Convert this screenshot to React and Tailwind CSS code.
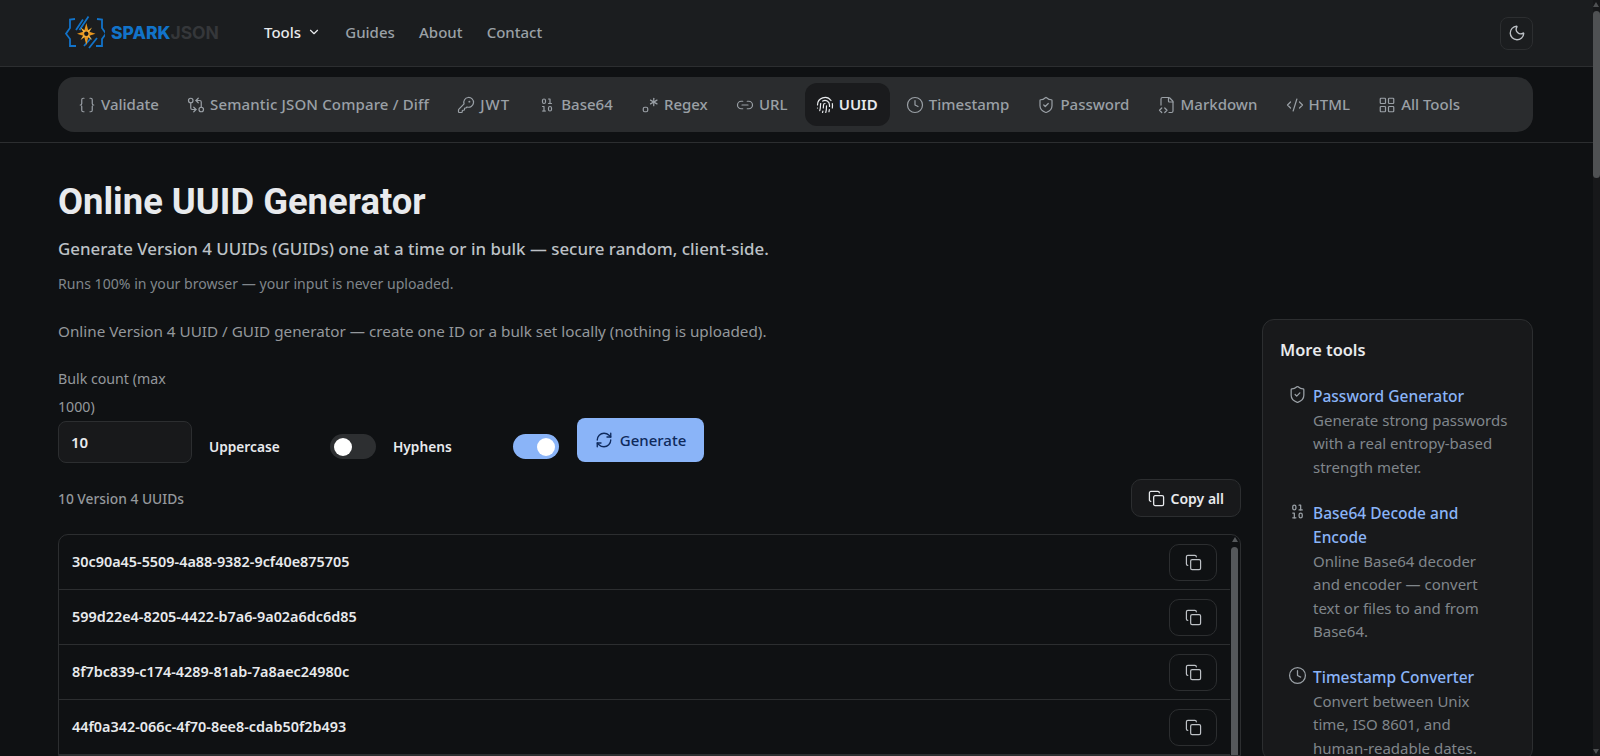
import React from 'react';
import {
  Braces, GitCompareArrows, KeyRound, Binary, Regex, Link2, Fingerprint, Clock, ShieldCheck,
  FileCode2, CodeXml, LayoutGrid, Moon, ChevronDown, RefreshCw, Copy,
} from 'lucide-react';

const toolLinks = [
  { label: 'Validate', icon: Braces },
  { label: 'Semantic JSON Compare / Diff', icon: GitCompareArrows, text: 'tracking-[0.15px]' },
  { label: 'JWT', icon: KeyRound, text: 'tracking-[1px]' },
  { label: 'Base64', icon: Binary },
  { label: 'Regex', icon: Regex },
  { label: 'URL', icon: Link2 },
  { label: 'UUID', icon: Fingerprint, active: true },
  { label: 'Timestamp', icon: Clock },
  { label: 'Password', icon: ShieldCheck },
  { label: 'Markdown', icon: FileCode2 },
  { label: 'HTML', icon: CodeXml },
  { label: 'All Tools', icon: LayoutGrid },
];

const uuids = [
  '30c90a45-5509-4a88-9382-9cf40e875705',
  '599d22e4-8205-4422-b7a6-9a02a6dc6d85',
  '8f7bc839-c174-4289-81ab-7a8aec24980c',
  '44f0a342-066c-4f70-8ee8-cdab50f2b493',
];

// line breaks are fixed so the sidebar wraps the same way as the original
const moreTools = [
  { title: 'Password Generator', desc: 'Generate strong passwords\nwith a real entropy-based\nstrength meter.', icon: ShieldCheck },
  { title: 'Base64 Decode and\nEncode', desc: 'Online Base64 decoder\nand encoder — convert\ntext or files to and from\nBase64.', icon: Binary },
  { title: 'Timestamp Converter', desc: 'Convert between Unix\ntime, ISO 8601, and\nhuman-readable dates.', icon: Clock },
];

const Logo = () => (
  <svg width="40" height="34" viewBox="4 3 40 34" fill="none" className="shrink-0">
    <path d="M14 6 L9 6.5 L9 15 L5 20.7 L9 26 L9 33 L15 33" stroke="#1273c9" strokeWidth="1.8" />
    <path d="M36 6 L41 6.5 L41 15 L45 20.7 L41 26 L41 33 L35 33" stroke="#1273c9" strokeWidth="1.8" />
    <path d="M15 17 L22 6.5 M18.5 17 L27.5 3.5 M23 33 L30 25 M28 35 L36 25" stroke="#1273c9" strokeWidth="1.8" />
    <path d="M25.3 10 L27.5 18.5 L34.5 20.7 L27.5 23 L25.3 32 L23 23 L16 20.7 L23 18.5 Z" fill="#e8961e" />
    <path d="M19.5 14.5 L25.3 18.5 L31 14.5 L27.3 20.7 L31 27 L25.3 23 L19.5 27 L23.2 20.7 Z" fill="#f3b13e" />
    <circle cx="25.3" cy="20.7" r="2.2" fill="#14161a" />
  </svg>
);

const Toggle = ({ on }) => (
  <span className={`flex items-center w-[46px] h-[25px] rounded-full px-[4px] ${on ? 'bg-[#8ab4f8] justify-end' : 'bg-[#2d2f31] justify-start'}`}>
    <span className="w-[18px] h-[18px] rounded-full bg-white" />
  </span>
);

export default function App() {
  return (
    <div className="flex h-screen overflow-hidden bg-[#0f1113] text-[#e8eaed] font-['Noto_Sans',sans-serif]">
      <div className="flex-1 min-w-0 overflow-hidden">
        <header className="flex items-center justify-between h-[67px] pl-[65px] pr-[60px] bg-[#1b1d1f] border-b border-[#2c2e30]">
          <div className="flex items-center">
            <a className="flex items-center w-[199px]">
              <Logo />
              <span className="ml-[6px] font-['Inter',sans-serif] text-[17.5px] font-extrabold text-[#1273c9]">
                SPARK<span className="font-bold text-[#35373a]">JSON</span>
              </span>
            </a>
            <nav className="flex items-center gap-[24.2px] -mt-[2px] text-[15px] font-medium text-[#9aa0a6]">
              <span className="flex items-center gap-[6px] text-[#e8eaed]">
                Tools <ChevronDown size={14} />
              </span>
              <span>Guides</span>
              <span>About</span>
              <span>Contact</span>
            </nav>
          </div>
          <button className="flex items-center justify-center w-[33px] h-[33px] rounded-lg bg-[#1b1d1f] border border-[#2c2e30] text-[#bdc1c6]">
            <Moon size={18} strokeWidth={1.8} />
          </button>
        </header>

        <div className="pl-[58px] pr-[60px] py-[10px] border-b border-[#2c2e30]">
          <nav className="flex items-center h-[55px] px-[9px] gap-[5px] rounded-2xl bg-[#2a2c2e] text-[15px] font-medium text-[#9aa0a6]">
            {toolLinks.map(({ label, icon: Icon, active, text }) => (
              <a
                key={label}
                className={`flex items-center gap-[5px] h-[43px] pl-[11px] pr-[12.2px] rounded-xl whitespace-nowrap ${active ? 'bg-[#1a1b1d] text-[#e8eaed] font-semibold' : ''}`}
              >
                <Icon size={18} strokeWidth={1.6} />
                <span className={text}>{label}</span>
              </a>
            ))}
          </nav>
        </div>

        <main className="pl-[58px] pr-[60px]">
          <h1 className="mt-[34px] text-[36.4px] leading-[50px] font-bold font-['Roboto',sans-serif] text-[#e8eaed]">Online UUID Generator</h1>
          <p className="mt-[9px] text-[16.9px] leading-[26px] font-medium text-[#bdc1c6]">
            Generate Version 4 UUIDs (GUIDs) one at a time or in bulk — secure random, client-side.
          </p>
          <p className="mt-[11px] text-[14.1px] leading-[22px] text-[#80868b]">
            Runs 100% in your browser — your input is never uploaded.
          </p>

          <div className="flex gap-[21px] mt-[24px]">
            <section className="flex-1 min-w-0">
              <p className="text-[15.25px] leading-[24px] text-[#94989c]">
                Online Version 4 UUID / GUID generator — create one ID or a bulk set locally (nothing is uploaded).
              </p>

              <div className="flex items-end mt-[22px]">
                <div className="w-[134px]">
                  <label className="block text-[14.2px] leading-[28px] text-[#94989c]">Bulk count (max 1000)</label>
                  <input
                    readOnly
                    value="10"
                    className="w-full h-[42px] px-[12px] rounded-lg bg-[#18191b] border border-[#2c2e30] text-[15px] font-semibold text-[#e8eaed] outline-none"
                  />
                </div>
                <div className="flex items-center mb-[4px] text-[13.7px] font-semibold text-[#e8eaed]">
                  <span className="ml-[17px] mt-[2px] w-[121px]">Uppercase</span>
                  <Toggle />
                  <span className="ml-[17px] mt-[2px] w-[120px]">Hyphens</span>
                  <Toggle on />
                </div>
                <button className="flex items-center justify-center gap-[7px] ml-[18px] mb-[1px] w-[127px] h-[44px] rounded-lg bg-[#8ab4f8] text-[15px] font-medium text-[#0f2a5c]">
                  <RefreshCw size={18} strokeWidth={1.8} />
                  Generate
                </button>
              </div>

              <div className="flex items-center justify-between mt-[16px]">
                <span className="pt-[2px] text-[13.8px] font-medium text-[#94989c]">10 Version 4 UUIDs</span>
                <button className="flex items-center gap-[6px] h-[38px] px-[16px] rounded-[10px] bg-[#18191b] border border-[#2c2e30] text-[14px] font-semibold text-[#e8eaed]">
                  <Copy size={17} strokeWidth={1.8} />
                  Copy all
                </button>
              </div>

              <div className="relative mt-[17px] rounded-t-[10px] border border-[#2c2e30] pr-[10px]">
                {uuids.map((id) => (
                  <div key={id} className="flex items-center justify-between h-[55px] pl-[13px] pr-[13px] border-b border-[#2c2e30] text-[14.4px] font-semibold text-[#e8eaed]">
                    {id}
                    <button className="flex items-center justify-center w-[48px] h-[37px] rounded-[10px] border border-[#2c2e30] text-[#bdc1c6]">
                      <Copy size={17} strokeWidth={1.7} />
                    </button>
                  </div>
                ))}
                <div className="absolute top-[2px] right-[2px] w-0 h-0 border-x-[3.5px] border-x-transparent border-b-[5px] border-b-[#55585b]" />
                <div className="absolute top-[12px] bottom-0 right-[2px] w-[7px] rounded-t-full bg-[#55585b]" />
              </div>
            </section>

            <aside className="w-[271px] shrink-0 rounded-xl bg-[#18191b] border border-[#2c2e30] pl-[17px] pr-[10px] pt-[18px]">
              <h2 className="text-[16.4px] leading-[24px] font-semibold text-[#e8eaed]">More tools</h2>
              <ul className="mt-[22px] flex flex-col gap-[21.5px]">
                {moreTools.map(({ title, desc, icon: Icon }) => (
                  <li key={title} className="flex gap-[6px] pl-[8px]">
                    <Icon size={19} strokeWidth={1.6} className="shrink-0 mt-[1px] text-[#9aa0a6]" />
                    <div>
                      <a className="block whitespace-pre-line text-[15.5px] leading-[24.5px] font-medium text-[#8ab4f8]">{title}</a>
                      <p className="whitespace-pre-line text-[15px] leading-[23.5px] text-[#80868b]">{desc}</p>
                    </div>
                  </li>
                ))}
              </ul>
            </aside>
          </div>
        </main>
      </div>

      <div className="relative w-[7px] shrink-0 bg-[#17181a]">
        <div className="absolute top-[2px] left-0 w-0 h-0 border-x-[3.5px] border-x-transparent border-b-[5px] border-b-[#4f5153]" />
        <div className="absolute top-[11px] left-0 w-full h-[167px] rounded-full bg-[#4f5153]" />
        <div className="absolute bottom-[2px] left-0 w-0 h-0 border-x-[3.5px] border-x-transparent border-t-[5px] border-t-[#4f5153]" />
      </div>
    </div>
  );
}
